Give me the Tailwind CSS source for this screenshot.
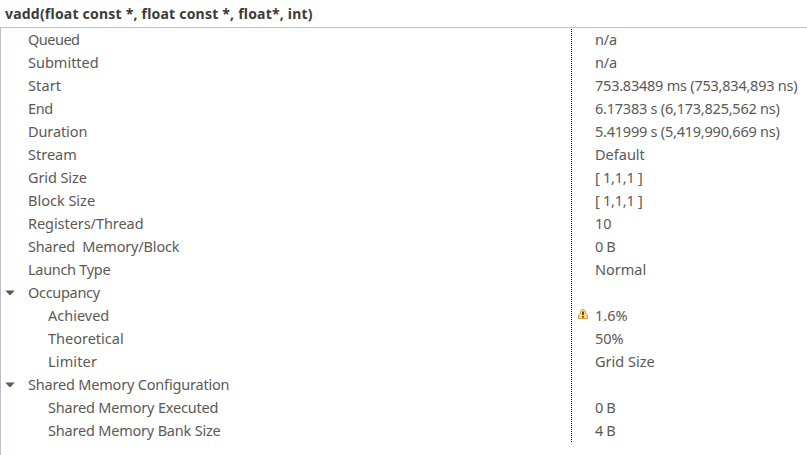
<!DOCTYPE html>
<html lang="en">
<head>
<meta charset="utf-8">
<title>Kernel properties</title>
<script src="https://cdn.jsdelivr.net/npm/@tailwindcss/browser@4"></script>
</head>
<body class="w-[807px] h-[455px] overflow-hidden bg-white flex flex-col font-['Noto_Sans','Open_Sans',sans-serif] text-[14.5px] text-[#5c5955] whitespace-pre">
<header class="h-7 shrink-0 border-b border-[#c0c0c4] pl-[5px] leading-[27px] text-[14px] font-bold text-[#3c3b37]"><span class="tracking-[0.21px]">vadd(float const *, float const *, float*, int)</span></header>
<main class="flex flex-1 border-l border-[#bcbec8] leading-[23px]">
  <section class="w-[570px] shrink-0 flex flex-col">
    <div class="h-[23px] pl-[27px]"><span class="tracking-[-0.5px]">Queued</span></div>
    <div class="h-[23px] pl-[27px]"><span>Submitted</span></div>
    <div class="h-[23px] pl-[27px]"><span class="tracking-[0.1px]">Start</span></div>
    <div class="h-[23px] pl-[27px]"><span class="tracking-[-0.4px]">End</span></div>
    <div class="h-[23px] pl-[27px]"><span class="tracking-[-0.1px]">Duration</span></div>
    <div class="h-[23px] pl-[27px]"><span>Stream</span></div>
    <div class="h-[23px] pl-[27px]"><span class="tracking-[-0.1px]">Grid Size</span></div>
    <div class="h-[23px] pl-[27px]"><span>Block Size</span></div>
    <div class="h-[23px] pl-[27px]"><span class="tracking-[-0.06px]">Registers/Thread</span></div>
    <div class="h-[23px] pl-[27px]"><span class="tracking-[-0.15px]">Shared  Memory/Block</span></div>
    <div class="h-[23px] pl-[27px]"><span class="tracking-[-0.3px]">Launch Type</span></div>
    <div class="h-[23px] pl-1 flex items-center"><svg class="w-[10px] h-[6px] mr-[13px]" viewBox="0 0 10 6"><path d="M.3.5h9.4L5 5.500z" fill="#5c5955"/></svg><span class="tracking-[-0.3px]">Occupancy</span></div>
    <div class="h-[23px] pl-[47px]"><span>Achieved</span></div>
    <div class="h-[23px] pl-[47px]"><span>Theoretical</span></div>
    <div class="h-[23px] pl-[47px]"><span class="tracking-[0.15px]">Limiter</span></div>
    <div class="h-[23px] pl-1 flex items-center"><svg class="w-[10px] h-[6px] mr-[13px]" viewBox="0 0 10 6"><path d="M.3.5h9.4L5 5.500z" fill="#5c5955"/></svg><span class="tracking-[-0.19px]">Shared Memory Configuration</span></div>
    <div class="h-[23px] pl-[47px]"><span class="tracking-[-0.18px]">Shared Memory Executed</span></div>
    <div class="h-[23px] pl-[47px]"><span class="tracking-[-0.2px]">Shared Memory Bank Size</span></div>
  </section>
  <div class="w-px h-[415px] shrink-0 bg-[repeating-linear-gradient(to_bottom,#fff_0px_1px,#000_1px_2px)]"></div>
  <section class="flex-1 flex flex-col">
    <div class="h-[23px] pl-[23px]"><span class="tracking-[-0.2px]">n/a</span></div>
    <div class="h-[23px] pl-[23px]"><span class="tracking-[-0.2px]">n/a</span></div>
    <div class="h-[23px] pl-[23px]"><span class="tracking-[-0.23px]">753.83489 ms (753,834,893 ns)</span></div>
    <div class="h-[23px] pl-[23px]"><span class="tracking-[-0.23px]">6.17383 s (6,173,825,562 ns)</span></div>
    <div class="h-[23px] pl-[23px]"><span class="tracking-[-0.23px]">5.41999 s (5,419,990,669 ns)</span></div>
    <div class="h-[23px] pl-[23px]"><span>Default</span></div>
    <div class="h-[23px] pl-[23px]"><span class="tracking-[-0.25px]">[ 1,1,1 ]</span></div>
    <div class="h-[23px] pl-[23px]"><span class="tracking-[-0.25px]">[ 1,1,1 ]</span></div>
    <div class="h-[23px] pl-[23px]"><span>10</span></div>
    <div class="h-[23px] pl-[23px]"><span class="tracking-[-0.4px]">0 B</span></div>
    <div class="h-[23px] pl-[23px]"><span>Normal</span></div>
    <div class="h-[23px]"></div>
    <div class="h-[23px] pl-[5px] flex"><svg class="w-[12px] h-[12px] mt-[4px] mr-[6px]" viewBox="0 0 12 12"><path d="M5 1.500h2l1.500 1.500v2l2 2.500v3h-9v-3l2-2.500v-2z" fill="#fcdc92" stroke="#d99a3e" stroke-linejoin="round"/><path d="M5 3.500h2v3.500H5zM5 8h2v1.500H5z" fill="#6b4717"/></svg><span>1.6%</span></div>
    <div class="h-[23px] pl-[23px]"><span>50%</span></div>
    <div class="h-[23px] pl-[23px]"><span>Grid Size</span></div>
    <div class="h-[23px]"></div>
    <div class="h-[23px] pl-[23px]"><span class="tracking-[-0.4px]">0 B</span></div>
    <div class="h-[23px] pl-[23px]"><span class="tracking-[-0.4px]">4 B</span></div>
  </section>
</main>
</body>
</html>
